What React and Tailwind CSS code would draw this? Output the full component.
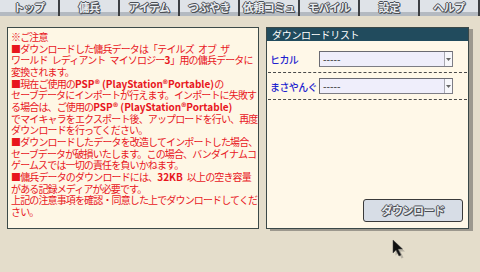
const tabs = ['トップ', '傭兵', 'アイテム', 'つぶやき', '依頼コミュ', 'モバイル', '設定', 'ヘルプ'];

const B = ({ children }) => <b className="tracking-normal">{children}</b>;

const notice = [
  ['※ご注意'],
  ['■ダウンロードした傭兵データは「テイルズ\u2002オブ\u2002ザ'],
  ['ワールド\u2002レディアント\u2002マイソロジー', <B key="b">3</B>, '」用の傭兵データに'],
  ['変換されます。'],
  ['■現在ご使用の', <B key="b1">PSP® (PlayStation®Portable)</B>, 'の'],
  ['セーブデータにインポートが行えます。インポートに失敗す'],
  ['る場合は、ご使用の', <B key="b1">PSP® (PlayStation®Portable)</B>],
  ['でマイキャラをエクスポート後、アップロードを行い、再度'],
  ['ダウンロードを行ってください。'],
  ['■ダウンロードしたデータを改造してインポートした場合、'],
  ['セーブデータが破損いたします。この場合、バンダイナムコ'],
  ['ゲームスでは一切の責任を負いかねます。'],
  ['■傭兵データのダウンロードには、', <B key="b">32KB</B>, '\u2002以上の空き容量'],
  ['がある記録メディアが必要です。'],
  ['上記の注意事項を確認・同意した上でダウンロードしてくだ'],
  ['さい。'],
];

const emboss = '[text-shadow:1px_0_#4b4f55,-1px_0_#4b4f55,0_1px_#4b4f55,0_-1px_#4b4f55,1px_1px_#4b4f55]';

const Select = () => (
  <div className="w-[134px] h-[16px] flex border border-[#7d7d85] border-t-[#6a6a72] border-l-[#6a6a72] bg-[#efeefb]">
    <span className="flex-1 pl-[3px] text-[10px] leading-[14px] text-[#222]">-----</span>
    <span className="w-[8px] h-full flex items-center justify-center border-l border-[#a9a9b2] bg-[#f7f7fb]">
      <svg width="5" height="3" viewBox="0 0 5 3"><path d="M0 0h5L2.5 3z" fill="#666" /></svg>
    </span>
  </div>
);

export default function App() {
  return (
    <div className="relative w-[480px] h-[272px] overflow-hidden bg-[#e4ddcb] font-['Noto_Sans_CJK_JP',sans-serif]">
      {/* Tab bar */}
      <div className="flex h-[16px]">
        {tabs.map((t) => (
          <div
            key={t}
            className="w-[60px] h-full flex justify-center pt-[1px] border-r-2 border-[#3d4044] bg-[linear-gradient(#dfe3e8_0,#dfe3e8_12px,#b4bac1_12px)]"
          >
            <span className={`text-[11px] leading-[12px] font-bold tracking-[-0.5px] text-[#e9ecf0] ${emboss}`}>{t}</span>
          </div>
        ))}
      </div>

      <div className="flex pt-[11px] pl-[7px]">
        {/* Notice panel */}
        <div className="w-[252px] h-[202px] border border-[#3c4a48] bg-[#fef7e5] pt-[3px] pl-[3px] text-[#e8161d] text-[10px] leading-[11.65px] tracking-[-0.86px]">
          {notice.map((line, i) => (
            <div key={i} className="whitespace-nowrap">{line}</div>
          ))}
        </div>

        {/* Download list panel */}
        <div className="ml-[7px] w-[203px] h-[202px] flex flex-col border border-[#3a4848] bg-[#fff8e8] shadow-[4px_2px_0_#9c988e]">
          <div className="h-[13px] bg-[#214b5d] pl-[5px] text-[10px] leading-[13px] text-white tracking-[-0.3px]">ダウンロードリスト</div>
          <div className="pt-[5px]">
            {['ヒカル', 'まさやんぐ'].map((name) => (
              <div key={name} className="mx-[1px] h-[27px] flex items-center border-b border-dashed border-[#4a4a4a]">
                <span className="w-[51px] pl-[2px] text-[10px] font-medium tracking-[-0.6px] text-[#1f1fcf]">{name}</span>
                <Select />
              </div>
            ))}
          </div>
          <div className="flex-1" />
          <div className="flex justify-end pr-[5px] pb-[6px]">
            <div className="w-[100px] h-[23px] rounded-[3px] border border-[#3a3a3a] bg-[#d7dde6] flex items-center justify-center">
              <span className={`text-[11px] leading-[13px] font-bold tracking-[-0.5px] text-[#e9ecf0] ${emboss}`}>ダウンロード</span>
            </div>
          </div>
        </div>
      </div>

      {/* Cursor */}
      <svg className="absolute left-[392px] top-[239px]" width="16" height="20" viewBox="0 0 16 20">
        <path d="M2.5 2.5 L2.5 15.5 L5.5 12.5 L8.5 18.5 L10.5 17.5 L7.5 11.5 L12 11.5 Z" fill="#9a968c" opacity="0.6" transform="translate(1 1)" />
        <path d="M1 1 L1 14 L4 11 L7 17 L9 16 L6 10 L10.5 10 Z" fill="#111" stroke="#444" strokeWidth="0.5" />
      </svg>
    </div>
  );
}
